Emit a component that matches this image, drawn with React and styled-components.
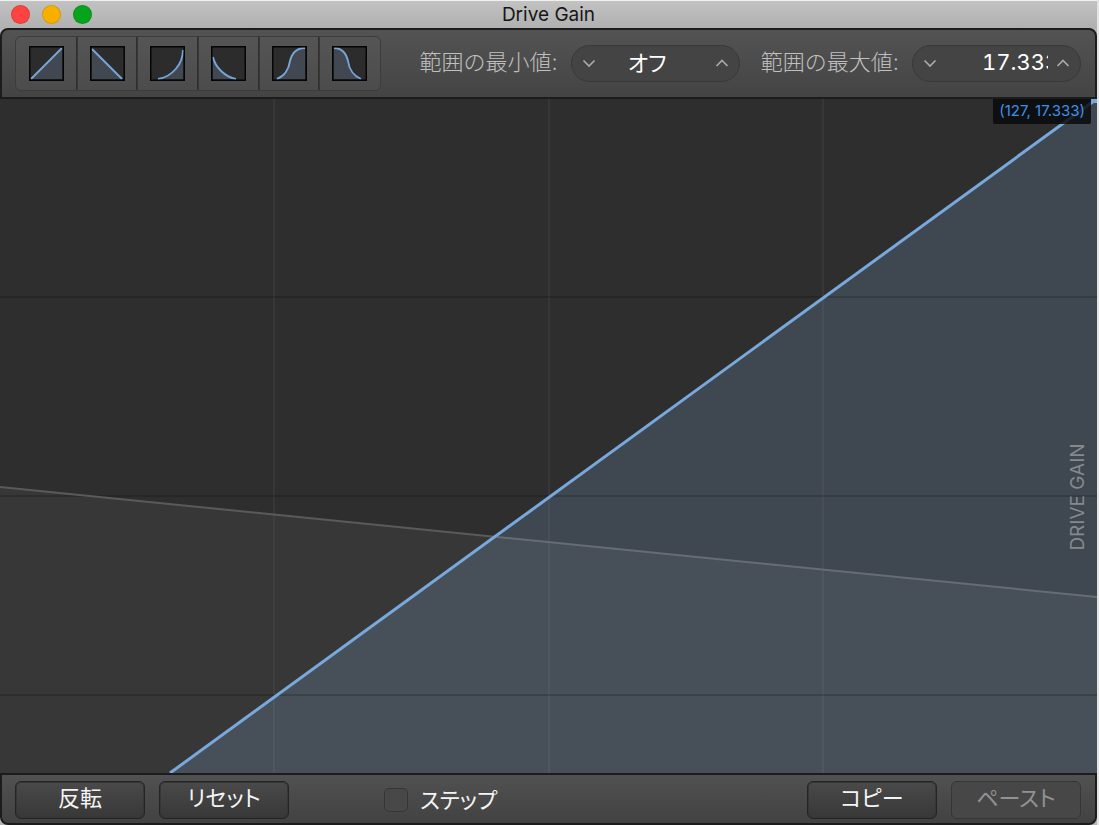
import { useState } from "react";
import styled, { createGlobalStyle } from "styled-components";

const GlobalStyle = createGlobalStyle`
* {
  box-sizing: border-box;
}
body {
  margin: 0;
  background: #e4e4e4;
  font-family: Inter, "Noto Sans CJK JP", sans-serif;
}
button, input {
  font-family: inherit;
}
`;

const Window = styled.div`
  display: flex;
  flex-direction: column;
  height: 100vh;
  margin-right: 2px;
  background: #b4b4b4;
  overflow: hidden;
`;

const TitleBar = styled.header`
  display: grid;
  grid-template-columns: 1fr auto 1fr;
  align-items: center;
  height: 28px;
  padding: 0 11px;
  border-top: 1px solid #f0f0f0;
  background: linear-gradient(#c2c2c2, #b0b0b0);
`;

const Lights = styled.div`
  display: flex;
  gap: 12px;
`;

const Light = styled.button`
  width: 19px;
  height: 19px;
  padding: 0;
  border: 1px solid rgba(0, 0, 0, 0.12);
  border-radius: 50%;
  background: ${(props) => props.$color};
`;

const Title = styled.h1`
  margin: 0;
  font-size: 19px;
  font-weight: 400;
  line-height: 24px;
  color: #161616;
`;

const Toolbar = styled.div`
  display: flex;
  align-items: center;
  justify-content: space-between;
  height: 71px;
  padding: 0 14px 0 13px;
  border: 2px solid #1c1c1c;
  border-radius: 8px 8px 0 0;
  background: linear-gradient(#535353, #444444);
`;

const Presets = styled.div`
  display: flex;
  width: 366px;
  height: 55px;
  border: 1px solid #3c3c3c;
  border-radius: 6px;
  background: linear-gradient(#555555, #4c4c4c);
`;

const PresetButton = styled.button`
  display: flex;
  flex: 1 1 0;
  align-items: center;
  justify-content: center;
  padding: 0;
  border: 0;
  background: none;

  & + & {
    box-shadow: -1px 0 #2f2f2f, inset 1px 0 #383838;
  }
`;

const Ranges = styled.div`
  display: flex;
  gap: 21px;
`;

const Range = styled.div`
  display: flex;
  align-items: center;
  gap: 13px;
`;

const RangeLabel = styled.label`
  padding-bottom: 4px;
  font-size: 22px;
  font-weight: 300;
  line-height: 32px;
  color: #c0c0c0;
  white-space: nowrap;
`;

const Field = styled.div`
  display: flex;
  align-items: center;
  justify-content: space-between;
  width: 169px;
  height: 37px;
  padding: 0 8px;
  border: 1px solid #393939;
  border-radius: 19px;
  background: #444444;
`;

const StepButton = styled.button`
  display: flex;
  align-items: center;
  justify-content: center;
  width: 18px;
  height: 24px;
  padding: 0 0 2px;
  border: 0;
  background: none;
`;

const Value = styled.input`
  width: ${(props) => (props.$number ? "66px" : "100px")};
  height: 34px;
  margin: ${(props) => (props.$number ? "0 6px 0 auto" : "0")};
  padding: ${(props) => (props.$number ? "0 0 4px" : "0 16px 6px 0")};
  border: 0;
  outline: 0;
  background: none;
  font-size: 22px;
  font-feature-settings: ${(props) => (props.$number ? '"tnum"' : '"palt"')};
  text-align: ${(props) => (props.$number ? "left" : "center")};
  color: #ffffff;
`;

const Graph = styled.main`
  position: relative;
  flex: 1;
  min-height: 0;
  background: #2e2e2e;
`;

const Plot = styled.svg`
  display: block;
  width: 100%;
  height: 100%;
`;

const PointBadge = styled.output`
  position: absolute;
  top: 0;
  right: 6px;
  padding: 0 6px 2px;
  border-radius: 0 0 2px 2px;
  background: rgba(8, 10, 12, 0.84);
  font-size: 15px;
  line-height: 23px;
  color: #3f8fe8;
`;

const AxisName = styled.span`
  position: absolute;
  top: 59%;
  right: 8px;
  transform: translateY(-50%) rotate(180deg);
  writing-mode: vertical-rl;
  font-size: 19px;
  line-height: 22px;
  color: #858a8f;
`;

const Footer = styled.footer`
  display: flex;
  align-items: center;
  gap: 14px;
  height: 52px;
  padding: 1px 14px 0 13px;
  border: 2px solid #1c1c1c;
  border-radius: 0 0 8px 8px;
  background: linear-gradient(#515151, #424242);
`;

const ActionButton = styled.button`
  width: 130px;
  height: 38px;
  padding: 0 0 4px;
  border: 1px solid #242424;
  border-radius: 6px;
  background: linear-gradient(#4a4a4a, #383838);
  box-shadow: inset 0 0 0 1px #363636;
  font-size: 22px;
  font-feature-settings: "palt";
  line-height: 30px;
  color: #f4f4f4;

  &:disabled {
    border-color: #363636;
    background: #474747;
    box-shadow: none;
    color: #929292;
  }
`;

const StepOption = styled.label`
  display: flex;
  align-items: center;
  gap: 12px;
  margin-left: 81px;
  margin-right: auto;
  font-size: 22px;
  font-feature-settings: "palt";
  line-height: 30px;
  color: #f4f4f4;
`;

const Checkbox = styled.input`
  appearance: none;
  width: 24px;
  height: 24px;
  margin: 0;
  border: 1px solid #363636;
  border-radius: 5px;
  background: #484848;

  &:checked {
    background: #78a8dc;
  }
`;

const presets = [
  { name: "Linear", line: "M2 33L33 2", area: "V33H2Z" },
  { name: "Inverted linear", line: "M2 3L32 33", area: "H2Z" },
  { name: "Exponential", line: "M8 33C22 31 33 18 33 4", area: "V33Z" },
  { name: "Inverted exponential", line: "M2 11C4 21 14 31 25 33", area: "H2Z" },
  { name: "S curve", line: "M5 33C13 30 17 22 18 15C20 7 25 2 33 2", area: "V33Z" },
  { name: "Inverted S curve", line: "M2 2C10 2 14 7 16 15C17 23 22 30 29 33", area: "H2Z" },
];

function CurveIcon({ line, area }) {
  return (
    <svg width="35" height="35" viewBox="0 0 35 35" aria-hidden="true">
      <rect x="0.5" y="0.5" width="34" height="34" fill="#2c2c2c" />
      <path d={line + area} fill="#414852" />
      <path d={line} fill="none" stroke="#78a5d8" strokeWidth="1.9" />
      <rect x="0.75" y="0.75" width="33.5" height="33.5" fill="none" stroke="#050505" strokeWidth="1.5" />
    </svg>
  );
}

function Chevron({ up }) {
  return (
    <svg width="14" height="10" viewBox="0 0 14 10" aria-hidden="true">
      <path
        d={up ? "M1.5 8L7 2.5L12.5 8" : "M1.5 2.5L7 8L12.5 2.5"}
        fill="none"
        stroke="#a9a9a9"
        strokeWidth="1.7"
      />
    </svg>
  );
}

function RangeField({ id, label, initial, number }) {
  const [value, setValue] = useState(initial);

  return (
    <Range>
      <RangeLabel htmlFor={id}>{label}</RangeLabel>
      <Field>
        <StepButton type="button" aria-label="Decrease">
          <Chevron />
        </StepButton>
        <Value
          id={id}
          type="text"
          $number={number}
          value={value}
          onChange={(e) => setValue(e.target.value)}
        />
        <StepButton type="button" aria-label="Increase">
          <Chevron up />
        </StepButton>
      </Field>
    </Range>
  );
}

function CurveGraph() {
  return (
    <Graph>
      <Plot viewBox="0 0 1097 674" preserveAspectRatio="none">
        {/* second curve, behind */}
        <path d="M0 388L1097 498V674H0Z" fill="#373737" />
        {/* drive gain curve */}
        <path d="M170 674L1094 2H1097V674Z" fill="#3f4750" />
        <path d="M497 438L1097 498V674H170Z" fill="#474f58" />
        {[274, 549, 823].map((x) => (
          <path key={x} d={`M${x} 0V674`} stroke="#ffffff" strokeOpacity="0.045" strokeWidth="2" />
        ))}
        {[198, 397, 596].map((y) => (
          <path key={y} d={`M0 ${y}H1097`} stroke="#000000" strokeOpacity="0.17" strokeWidth="2" />
        ))}
        <path d="M0 388L497 438" stroke="#5a5a5a" strokeWidth="2" />
        <path d="M497 438L1097 498" stroke="#666c74" strokeWidth="2" />
        <path d="M170 674L1094 2" stroke="#78a8dc" strokeWidth="3" />
        <rect x="1091" y="0" width="6" height="4" fill="#78a8dc" />
      </Plot>
      <PointBadge>(127, 17.333)</PointBadge>
      <AxisName>DRIVE GAIN</AxisName>
    </Graph>
  );
}

function App() {
  const [step, setStep] = useState(false);

  return (
    <Window>
      <GlobalStyle />
      <TitleBar>
        <Lights>
          <Light type="button" aria-label="Close" $color="#ff4340" />
          <Light type="button" aria-label="Minimize" $color="#f8b000" />
          <Light type="button" aria-label="Zoom" $color="#08a31c" />
        </Lights>
        <Title>Drive Gain</Title>
      </TitleBar>

      <Toolbar>
        <Presets>
          {presets.map((preset) => (
            <PresetButton key={preset.name} type="button" aria-label={preset.name}>
              <CurveIcon line={preset.line} area={preset.area} />
            </PresetButton>
          ))}
        </Presets>
        <Ranges>
          <RangeField id="range-min" label="範囲の最小値:" initial="オフ" />
          <RangeField id="range-max" label="範囲の最大値:" initial="17.333" number />
        </Ranges>
      </Toolbar>

      <CurveGraph />

      <Footer>
        <ActionButton type="button">反転</ActionButton>
        <ActionButton type="button">リセット</ActionButton>
        <StepOption>
          <Checkbox type="checkbox" checked={step} onChange={(e) => setStep(e.target.checked)} />
          ステップ
        </StepOption>
        <ActionButton type="button">コピー</ActionButton>
        <ActionButton type="button" disabled>
          ペースト
        </ActionButton>
      </Footer>
    </Window>
  );
}

export default App;
